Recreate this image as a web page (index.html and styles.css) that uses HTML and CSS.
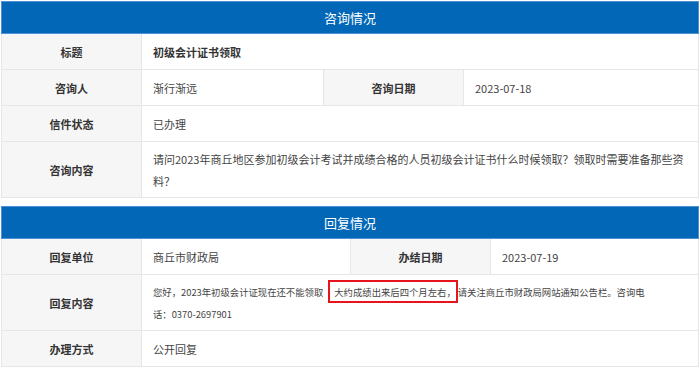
FILE: index.html
```html
<!DOCTYPE html>
<html lang="zh-CN">
<head>
  <meta charset="utf-8">
  <title>咨询详情</title>
  <link rel="stylesheet" href="styles.css">
</head>
<body>

  <!-- 咨询情况 -->
  <table class="info consult">
    <colgroup>
      <col class="c-label"><col class="c-val"><col class="c-label"><col>
    </colgroup>
    <tr><th colspan="4">咨询情况</th></tr>
    <tr>
      <td class="label">标题</td>
      <td colspan="3" class="title">初级会计证书领取</td>
    </tr>
    <tr>
      <td class="label">咨询人</td>
      <td>渐行渐远</td>
      <td class="label">咨询日期</td>
      <td>2023-07-18</td>
    </tr>
    <tr>
      <td class="label">信件状态</td>
      <td colspan="3">已办理</td>
    </tr>
    <tr>
      <td class="label">咨询内容</td>
      <td colspan="3" class="text">请问2023年商丘地区参加初级会计考试并成绩合格的人员初级会计证书什么时候领取？领取时需要准备那些资料？</td>
    </tr>
  </table>

  <!-- 回复情况 -->
  <table class="info reply">
    <colgroup>
      <col class="c-label"><col class="c-val"><col class="c-label"><col>
    </colgroup>
    <tr><th colspan="4">回复情况</th></tr>
    <tr>
      <td class="label">回复单位</td>
      <td>商丘市财政局</td>
      <td class="label">办结日期</td>
      <td>2023-07-19</td>
    </tr>
    <tr>
      <td class="label">回复内容</td>
      <td colspan="3" class="text small">您好，2023年初级会计证现在还不能领取<span class="mark">大约成绩出来后四个月左右，</span>请关注商丘市财政局网站通知公告栏。咨询电<br>话：0370-2697901</td>
    </tr>
    <tr>
      <td class="label">办理方式</td>
      <td colspan="3">公开回复</td>
    </tr>
  </table>

</body>
</html>
```

FILE: styles.css
```css
body {
  margin: 0;
  padding: 1px 0 0 1px;
  background: #fff;
  font-family: "Noto Sans CJK SC", "Noto Sans", sans-serif;
  font-size: 11px;
  color: #333;
}

.info {
  width: 698px;
  border-collapse: collapse;
  table-layout: fixed;
  border: 1px solid #e6e6e6;
}

.info + .info {
  margin-top: 8px;
}

.c-label { width: 140px; }
.consult .c-val { width: 182px; }
.reply .c-val { width: 209px; }

.info th {
  height: 31px;
  padding: 0;
  background: #0167b6;
  border: 1px solid #4c92d2;
  color: #fff;
  font-size: 13px;
  font-weight: normal;
  text-align: center;
}

.info td {
  padding: 7px 11px 6px;
  line-height: 22px;
  border: 1px solid #e6e6e6;
  vertical-align: middle;
  color: #444;
}

.info td.label {
  background: #f6f6f6;
  text-align: center;
  font-weight: bold;
  color: #333;
}

.info td.title {
  font-weight: bold;
  color: #333;
}

.info td.text {
  padding-top: 6px;
  padding-bottom: 5px;
}

.info td.small {
  font-size: 9.35px;
}

.mark {
  margin-left: 5px;
  padding: 3px 0 2px 4px;
  border: 2px solid #e8141b;
}
```
